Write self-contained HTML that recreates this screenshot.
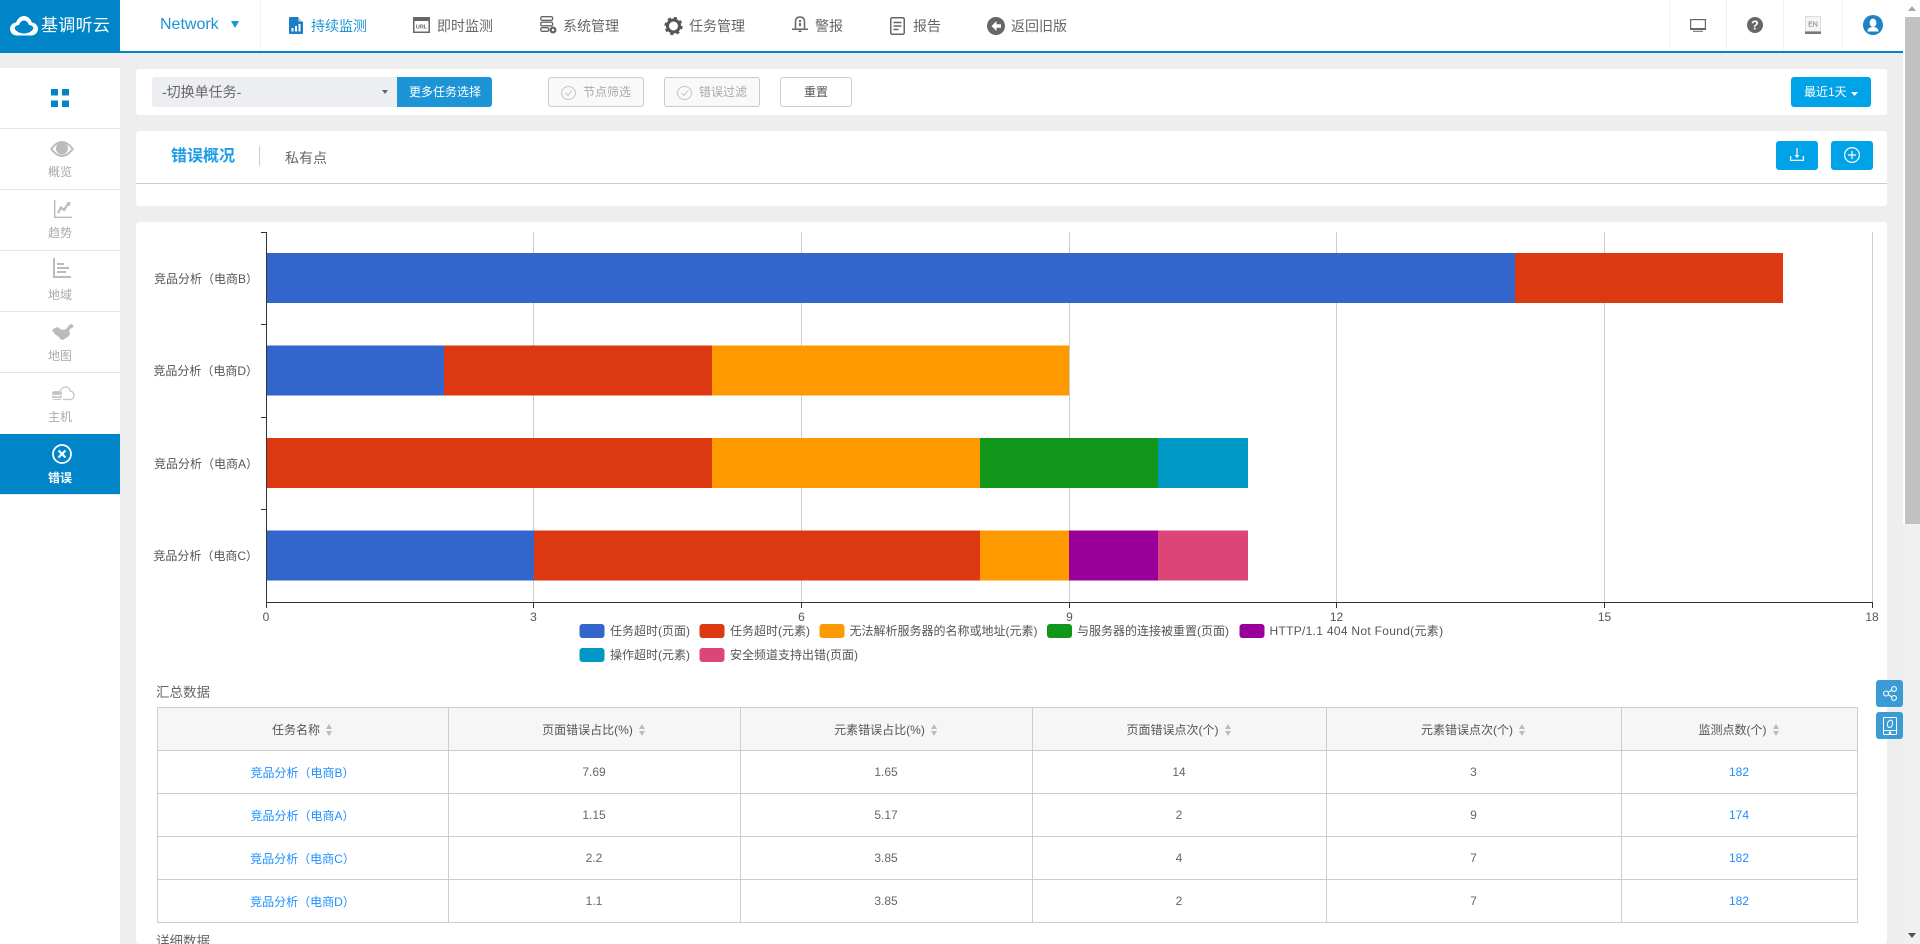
<!DOCTYPE html>
<html lang="zh-CN">
<head>
<meta charset="utf-8">
<title>错误概况</title>
<style>
html,body{margin:0;padding:0;width:1920px;height:944px;overflow:hidden;background:#eee}
body{position:relative;font-family:"Liberation Sans","Noto Sans CJK SC",sans-serif;font-size:12px;color:#666}
.a{position:absolute}
.t{position:absolute;white-space:nowrap;line-height:20px;height:20px}
.c{text-align:center}
.nav{font-size:14px;color:#666;top:16px}
.side{font-size:12px;color:#aaa;left:0;width:120px;text-align:center}
.ln{position:absolute;left:0;width:120px;height:1px;background:#e4e4e4}
.vd{position:absolute;top:0;width:1px;height:50px;background:#f0f0f0}
.panel{position:absolute;left:136px;width:1751px;background:#fff;border-radius:3px}
.btn{position:absolute;top:77px;height:30px;box-sizing:border-box;border-radius:3px}
.blue{position:absolute;background:#00a2e8;border-radius:3px}
svg{position:absolute;overflow:visible}
table{position:absolute;left:156.500px;top:707px;width:1700px;height:216px;border-collapse:collapse;table-layout:fixed;font-size:12px;color:#666;background:#fff}
td,th{border:1px solid #ccc;text-align:center;padding:0;height:42px;font-weight:400}
th{background:#f6f6f6;color:#555}
td.l{color:#1e8fff}
.s{display:inline-block;width:7px;height:12px;margin-left:6px;vertical-align:-2px;position:relative}
.s:before,.s:after{content:"";position:absolute;left:0;border-left:3.500px solid transparent;border-right:3.500px solid transparent}
.s:before{top:0;border-bottom:5px solid #bbb}
.s:after{bottom:0;border-top:5px solid #bbb}
</style>
</head>
<body>

<!-- top bar -->
<div class="a" style="left:0;top:0;width:1903px;height:51px;background:#fff"></div>
<div class="a" style="left:0;top:51px;width:1903px;height:2px;background:#0085c8"></div>
<div class="a" style="left:0;top:0;width:120px;height:53px;background:#0085c8"></div>
<svg style="left:10px;top:16px" width="28" height="20" viewBox="0 0 28 20">
<path d="M7 19.500C3 19.500 0 16.800 0 12.800C0 9.200 3 6.800 6 6.600C7.500 2.500 10.500 0 14 0C17.500 0 20.500 2.500 22 6.600C25 6.800 28 9.200 28 12.800C28 16.800 25 19.500 21 19.500Z" fill="#fff"/>
<path d="M4.500 12.500C5 9.800 7.500 8.800 9 9C10 6 12 4.500 14 4.500C16 4.500 18 6 19 9C20.500 8.800 23 9.800 23.500 12.500C21.500 15.800 18 17.500 14 17.500C10 17.500 6.500 15.800 4.500 12.500Z" fill="#0085c8"/>
</svg>
<div class="t" style="left:41px;top:16px;font-size:17px;color:#fff;letter-spacing:.3px">基调听云</div>

<div class="t" style="left:160px;top:15px;font-size:16px;color:#1c94d6">Network</div>
<svg style="left:231px;top:21px" width="8" height="7"><path d="M0 0H8L4 7Z" fill="#1c94d6"/></svg>
<div class="vd" style="left:260px"></div>

<svg style="left:289px;top:17px" width="14" height="17" viewBox="0 0 14 17"><path d="M1 0H9L14 5V16Q14 17 13 17H1Q0 17 0 16V1Q0 0 1 0Z" fill="#1c7fc6"/><path d="M2.500 14.500V11H4.500V14.500ZM6 14.500V9H8V14.500ZM9.500 14.500V7H11.500V14.500Z" fill="#fff"/><path d="M9.500 0V4.500H14Z" fill="#fff" opacity=".7"/></svg>
<div class="t nav" style="left:311px;color:#1c94d6">持续监测</div>

<svg style="left:413px;top:17px" width="17" height="16" viewBox="0 0 17 16"><rect x=".75" y=".75" width="15.500" height="14.500" fill="#fff" stroke="#666" stroke-width="1.500"/><rect x="0" y="0" width="17" height="4" fill="#666"/><text x="8.500" y="11.500" font-size="5.500" font-weight="700" fill="#666" text-anchor="middle" font-family="Liberation Sans">URL</text></svg>
<div class="t nav" style="left:437px">即时监测</div>

<svg style="left:540px;top:16px" width="17" height="18" viewBox="0 0 17 18" fill="none" stroke="#666" stroke-width="1.300"><rect x=".7" y=".7" width="12" height="3.600" rx="1.500"/><rect x=".7" y="6.200" width="12" height="3.600" rx="1.500"/><rect x=".7" y="11.700" width="8" height="3.600" rx="1.500"/><circle cx="13" cy="14" r="3.500" fill="#666" stroke="none"/><circle cx="13" cy="14" r="1.200" fill="#fff" stroke="none"/></svg>
<div class="t nav" style="left:563px">系统管理</div>

<svg style="left:664px;top:17px" width="19" height="18" viewBox="0 0 19 18"><circle cx="9.500" cy="9" r="6" fill="none" stroke="#555" stroke-width="3"/><circle cx="9.500" cy="9" r="8" fill="none" stroke="#555" stroke-width="2.200" stroke-dasharray="3.200 3.100"/></svg>
<div class="t nav" style="left:689px">任务管理</div>

<svg style="left:792px;top:16px" width="16" height="16" viewBox="0 0 16 16"><path d="M3.500 13V6Q3.500 1 8 1Q12.500 1 12.500 6V13" fill="none" stroke="#666" stroke-width="1.500"/><rect x="0" y="12.500" width="16" height="1.500" fill="#666"/><rect x="6.500" y="14.500" width="3" height="1.500" fill="#666"/><rect x="7" y="4" width="2" height="2" fill="#666"/><rect x="7" y="7" width="2" height="3" fill="#666"/></svg>
<div class="t nav" style="left:815px">警报</div>

<svg style="left:890px;top:17px" width="15" height="18" viewBox="0 0 15 18" fill="none" stroke="#666" stroke-width="1.500"><rect x=".75" y=".75" width="13.500" height="16.500" rx="1.500"/><path d="M3.500 5.500H11.500M3.500 9H11.500M3.500 12.500H8.500"/></svg>
<div class="t nav" style="left:913px">报告</div>

<svg style="left:987px;top:17px" width="18" height="18" viewBox="0 0 18 18"><circle cx="9" cy="9" r="9" fill="#666"/><path d="M9.500 4L4.500 9L9.500 14V10.700H14V7.300H9.500Z" fill="#fff"/></svg>
<div class="t nav" style="left:1011px">返回旧版</div>

<div class="vd" style="left:1669px"></div>
<div class="vd" style="left:1726px"></div>
<div class="vd" style="left:1783px"></div>
<div class="vd" style="left:1842px"></div>
<svg style="left:1690px;top:19px" width="16" height="13" viewBox="0 0 16 13"><rect x=".6" y=".6" width="14.800" height="9.800" fill="#fff" stroke="#666" stroke-width="1.200"/><rect x="0" y="9" width="16" height="2" fill="#666"/><rect x="3" y="11.700" width="10" height="1.300" fill="#888"/></svg>
<svg style="left:1747px;top:17px" width="16" height="16" viewBox="0 0 16 16"><circle cx="8" cy="8" r="8" fill="#666"/><text x="8" y="12.500" font-size="12.500" font-weight="700" fill="#fff" text-anchor="middle" font-family="Liberation Sans">?</text></svg>
<svg style="left:1805px;top:16px" width="16" height="18" viewBox="0 0 16 18"><rect x=".5" y=".5" width="15" height="15" fill="#f4f4f4" stroke="#ddd"/><rect x="0" y="15.500" width="16" height="2.500" fill="#777"/><text x="8" y="10.500" font-size="7" fill="#777" text-anchor="middle" font-family="Liberation Sans">EN</text></svg>
<svg style="left:1863px;top:15px" width="20" height="20" viewBox="0 0 20 20"><circle cx="10" cy="10" r="10" fill="#1d83c6"/><ellipse cx="10" cy="7.800" rx="3.400" ry="4.200" fill="#fff"/><path d="M4.500 16.500Q4.500 12 10 12Q15.500 12 15.500 16.500Z" fill="#fff"/></svg>

<!-- scrollbar -->
<div class="a" style="left:1903px;top:0;width:17px;height:944px;background:#f0f0f0"></div>
<div class="a" style="left:1903px;top:0;width:17px;height:17px;background:#fff"></div>
<div class="a" style="left:1903px;top:17px;width:2px;height:507px;background:#fff"></div>
<div class="a" style="left:1905px;top:17px;width:15px;height:507px;background:#c1c1c1"></div>
<svg style="left:1908px;top:6px" width="8" height="5"><path d="M0 5H8L4 0Z" fill="#a8a8a8"/></svg>
<svg style="left:1908px;top:933px" width="8" height="5"><path d="M0 0H8L4 5Z" fill="#505050"/></svg>

<!-- sidebar -->
<div class="a" style="left:0;top:68px;width:120px;height:876px;background:#fff"></div>
<svg style="left:51px;top:89px" width="18" height="18"><path d="M0 0H7V6.500H0ZM11 0H18V6.500H11ZM0 11.500H7V18H0ZM11 11.500H18V18H11Z" fill="#0085c8"/></svg>
<div class="ln" style="top:128px"></div>
<div class="ln" style="top:189px"></div>
<div class="ln" style="top:250px"></div>
<div class="ln" style="top:311px"></div>
<div class="ln" style="top:372px"></div>

<svg style="left:50px;top:141px" width="24" height="16" viewBox="0 0 24 16"><path d="M0 8Q6 0 12 0Q18 0 24 8Q18 16 12 16Q6 16 0 8ZM2.500 8Q7 14 12 14Q17 14 21.500 8Q17 2 12 2Q7 2 2.500 8Z" fill="#bbb"/><circle cx="12" cy="7.500" r="6" fill="#bbb"/></svg>
<div class="t side" style="top:162px">概览</div>

<svg style="left:54px;top:200px" width="18" height="18" viewBox="0 0 18 18"><path d="M.7 0V17.300H18" fill="none" stroke="#bbb" stroke-width="1.400"/><path d="M4 13L7 7.500L10 10L14 4" fill="none" stroke="#bbb" stroke-width="2.200"/><path d="M12 2.500L16.500 2L16 6.500Z" fill="#bbb"/></svg>
<div class="t side" style="top:223px">趋势</div>

<svg style="left:53px;top:258px" width="18" height="20" viewBox="0 0 18 20"><path d="M1 0V19H18" fill="none" stroke="#bbb" stroke-width="2"/><path d="M4 5H11V7H4ZM4 9H16V11H4ZM4 13H13V15H4Z" fill="#bbb"/></svg>
<div class="t side" style="top:285px">地域</div>

<svg style="left:52px;top:324px" width="22" height="16" viewBox="0 0 22 16"><path d="M0 6L3 4L6 3L8 5L11 6L14 5L16 3L17 1L19 0L22 2L20 4L18 5L17 7L18 9L17 12L14 14L11 16L8 15L7 13L4 11L2 9Z" fill="#bbb"/></svg>
<div class="t side" style="top:346px">地图</div>

<svg style="left:52px;top:387px" width="22" height="13" viewBox="0 0 22 13"><path d="M8 4Q10 0 14 0Q17.500 .3 18 4Q22 4.500 22 8.500Q22 12 18 12.500H11" fill="none" stroke="#c4c4c4" stroke-width="1.200"/><path d="M0 5.500Q0 4 5 4Q10 4 10 5.500V7Q10 8 5 8Q0 8 0 7ZM0 8.500Q3 9.500 5 9.500Q7 9.500 10 8.500V10Q10 11 5 11Q0 11 0 10ZM0 11.500Q3 12 5 12Q7 12 10 11.500Q10 13 5 13Q0 13 0 11.500Z" fill="#c4c4c4"/></svg>
<div class="t side" style="top:407px">主机</div>

<div class="a" style="left:0;top:434px;width:120px;height:60px;background:#0085c8"></div>
<div class="ln" style="top:494px"></div>
<svg style="left:52px;top:444px" width="20" height="20" viewBox="0 0 20 20"><circle cx="10" cy="10" r="9" fill="none" stroke="#fff" stroke-width="1.800"/><path d="M6.500 6.500L13.500 13.500M13.500 6.500L6.500 13.500" stroke="#fff" stroke-width="2.200"/></svg>
<div class="t side" style="top:468px;color:#fff;font-weight:700">错误</div>

<!-- toolbar panel -->
<div class="panel" style="top:69px;height:46px"></div>
<div class="a" style="left:152px;top:77px;width:245px;height:30px;background:#eceef1;border-radius:3px 0 0 3px"></div>
<div class="t" style="left:162px;top:82px;font-size:14px;color:#666">-切换单任务-</div>
<svg style="left:382px;top:90px" width="6" height="4"><path d="M0 0H6L3 4Z" fill="#666"/></svg>
<div class="a" style="left:397px;top:77px;width:95px;height:30px;background:#1c94d6;border-radius:0 3px 3px 0"></div>
<div class="t" style="left:409px;top:82px;color:#fff">更多任务选择</div>

<div class="btn" style="left:548px;width:96px;border:1px solid #ccc;background:#f9f9f9"></div>
<svg style="left:561px;top:86px" width="15" height="14" viewBox="0 0 15 14" fill="none" stroke="#c6c6c6"><ellipse cx="7.500" cy="7" rx="7" ry="6.500"/><path d="M4.500 7L7 9.500L11 4.500"/></svg>
<div class="t" style="left:583px;top:82px;color:#aaa">节点筛选</div>
<div class="btn" style="left:664px;width:96px;border:1px solid #ccc;background:#f9f9f9"></div>
<svg style="left:677px;top:86px" width="15" height="14" viewBox="0 0 15 14" fill="none" stroke="#c6c6c6"><ellipse cx="7.500" cy="7" rx="7" ry="6.500"/><path d="M4.500 7L7 9.500L11 4.500"/></svg>
<div class="t" style="left:699px;top:82px;color:#aaa">错误过滤</div>
<div class="btn" style="left:780px;width:72px;border:1px solid #ccc;background:#fff"></div>
<div class="t c" style="left:780px;width:72px;top:82px;color:#555">重置</div>
<div class="blue" style="left:1791px;top:77px;width:80px;height:30px"></div>
<div class="t" style="left:1804px;top:82px;color:#fff">最近1天</div>
<svg style="left:1851px;top:92px" width="7" height="4"><path d="M0 0H7L3.500 4Z" fill="#fff"/></svg>

<!-- title panel -->
<div class="panel" style="top:131px;height:75px"></div>
<div class="a" style="left:136px;top:183px;width:1751px;height:1px;background:#ccc"></div>
<div class="t" style="left:171px;top:147px;font-size:16px;font-weight:700;color:#1c9be6">错误概况</div>
<div class="a" style="left:259px;top:146px;width:1px;height:20px;background:#ccc"></div>
<div class="t" style="left:285px;top:148px;font-size:14px;color:#666">私有点</div>
<div class="blue" style="left:1776px;top:141px;width:42px;height:29px"></div>
<svg style="left:1790px;top:148px" width="14" height="13" fill="none" stroke="#fff" stroke-width="1.200"><path d="M.6 8V12.400H13.400V8"/><path d="M7 0V8"/><path d="M4.500 7L7 10L9.500 7" fill="#fff" stroke="none"/></svg>
<div class="blue" style="left:1831px;top:141px;width:42px;height:29px"></div>
<svg style="left:1844px;top:147px" width="16" height="16" fill="none" stroke="#fff" stroke-width="1.200"><circle cx="8" cy="8" r="7.400"/><path d="M8 4V12M4 8H12"/></svg>

<!-- main panel -->
<div class="panel" style="top:222px;height:722px"></div>

<!-- chart -->
<svg style="left:0;top:0" width="1920" height="944" viewBox="0 0 1920 944">
<g stroke="#ccc" stroke-width="1">
<path d="M533.500 232V602M801.500 232V602M1069.500 232V602M1336.500 232V602M1604.500 232V602M1872.500 232V602"/>
</g>
<g stroke-width="0">
<rect x="266" y="253" width="1249" height="50" fill="#3366cc"/>
<rect x="1515" y="253" width="268" height="50" fill="#dc3912"/>
<rect x="266" y="345.500" width="178" height="50" fill="#3366cc"/>
<rect x="444" y="345.500" width="268" height="50" fill="#dc3912"/>
<rect x="712" y="345.500" width="357" height="50" fill="#ff9900"/>
<rect x="266" y="438" width="446" height="50" fill="#dc3912"/>
<rect x="712" y="438" width="268" height="50" fill="#ff9900"/>
<rect x="980" y="438" width="178" height="50" fill="#109618"/>
<rect x="1158" y="438" width="90" height="50" fill="#0099c6"/>
<rect x="266" y="530.500" width="268" height="50" fill="#3366cc"/>
<rect x="534" y="530.500" width="446" height="50" fill="#dc3912"/>
<rect x="980" y="530.500" width="89" height="50" fill="#ff9900"/>
<rect x="1069" y="530.500" width="89" height="50" fill="#990099"/>
<rect x="1158" y="530.500" width="90" height="50" fill="#dd4477"/>
</g>
<path d="M266.500 232V603M261 232.500H266M261 324.500H266M261 417.500H266M261 509.500H266M266 602.500H1873M266.500 603V608M533.500 603V608M801.500 603V608M1069.500 603V608M1336.500 603V608M1604.500 603V608M1872.500 603V608" fill="none" stroke="#333" stroke-width="1"/>
<g font-size="12" fill="#555" text-anchor="end" font-family="'Liberation Sans','Noto Sans CJK SC',sans-serif">
<text x="258" y="283">竞品分析（电商B）</text>
<text x="258" y="375">竞品分析（电商D）</text>
<text x="258" y="468">竞品分析（电商A）</text>
<text x="258" y="560">竞品分析（电商C）</text>
</g>
<g font-size="12" fill="#555" text-anchor="middle" font-family="'Liberation Sans',sans-serif">
<text x="266" y="621">0</text><text x="533.500" y="621">3</text><text x="801.500" y="621">6</text><text x="1069.500" y="621">9</text><text x="1336.500" y="621">12</text><text x="1604.500" y="621">15</text><text x="1872" y="621">18</text>
</g>
<g>
<rect x="579.500" y="624" width="25" height="14" rx="3" fill="#3366cc"/>
<rect x="699.500" y="624" width="25" height="14" rx="3" fill="#dc3912"/>
<rect x="819.500" y="624" width="25" height="14" rx="3" fill="#ff9900"/>
<rect x="1047" y="624" width="25" height="14" rx="3" fill="#109618"/>
<rect x="1239.500" y="624" width="25" height="14" rx="3" fill="#990099"/>
<rect x="579.500" y="648" width="25" height="14" rx="3" fill="#0099c6"/>
<rect x="699.500" y="648" width="25" height="14" rx="3" fill="#dd4477"/>
</g>
<g font-size="12" fill="#555" font-family="'Liberation Sans','Noto Sans CJK SC',sans-serif">
<text x="610" y="635">任务超时(页面)</text>
<text x="730" y="635">任务超时(元素)</text>
<text x="849.500" y="635">无法解析服务器的名称或地址(元素)</text>
<text x="1077" y="635">与服务器的连接被重置(页面)</text>
<text x="1269.500" y="635" letter-spacing=".3">HTTP/1.1 404 Not Found(元素)</text>
<text x="610" y="659">操作超时(元素)</text>
<text x="730" y="659">安全频道支持出错(页面)</text>
</g>
</svg>

<!-- table -->
<div class="t" style="left:156px;top:683px;font-size:13.500px;color:#666">汇总数据</div>
<table>
<colgroup><col style="width:291px"><col style="width:292px"><col style="width:292px"><col style="width:294px"><col style="width:295px"><col style="width:236px"></colgroup>
<tr><th>任务名称<i class="s"></i></th><th>页面错误占比(%)<i class="s"></i></th><th>元素错误占比(%)<i class="s"></i></th><th>页面错误点次(个)<i class="s"></i></th><th>元素错误点次(个)<i class="s"></i></th><th>监测点数(个)<i class="s"></i></th></tr>
<tr><td class="l">竞品分析（电商B）</td><td>7.69</td><td>1.65</td><td>14</td><td>3</td><td class="l">182</td></tr>
<tr><td class="l">竞品分析（电商A）</td><td>1.15</td><td>5.17</td><td>2</td><td>9</td><td class="l">174</td></tr>
<tr><td class="l">竞品分析（电商C）</td><td>2.2</td><td>3.85</td><td>4</td><td>7</td><td class="l">182</td></tr>
<tr><td class="l">竞品分析（电商D）</td><td>1.1</td><td>3.85</td><td>2</td><td>7</td><td class="l">182</td></tr>
</table>
<div class="t" style="left:156px;top:932px;font-size:13.500px;color:#666">详细数据</div>

<!-- float buttons -->
<div class="a" style="left:1876px;top:680px;width:27px;height:27px;background:#3a9bd5;border-radius:3px"></div>
<svg style="left:1883px;top:686px" width="14" height="15" fill="none" stroke="#fff" stroke-width="1.100"><circle cx="3" cy="7.500" r="2.500"/><circle cx="11" cy="3" r="2.400"/><circle cx="11" cy="12" r="2.400"/><path d="M5.200 6.300L9 4.100M5.200 8.700L9 10.900"/></svg>
<div class="a" style="left:1876px;top:712px;width:27px;height:27px;background:#3a9bd5;border-radius:3px"></div>
<svg style="left:1883px;top:717px" width="14" height="18" fill="none" stroke="#fff" stroke-width="1"><rect x=".5" y=".5" width="13" height="17" rx="1"/><path d="M.5 13.500H13.500"/><circle cx="7" cy="15.700" r=".8" fill="#fff"/><ellipse cx="7" cy="6.800" rx="2.500" ry="3.800" transform="rotate(15 7 6.800)"/></svg>

</body>
</html>
